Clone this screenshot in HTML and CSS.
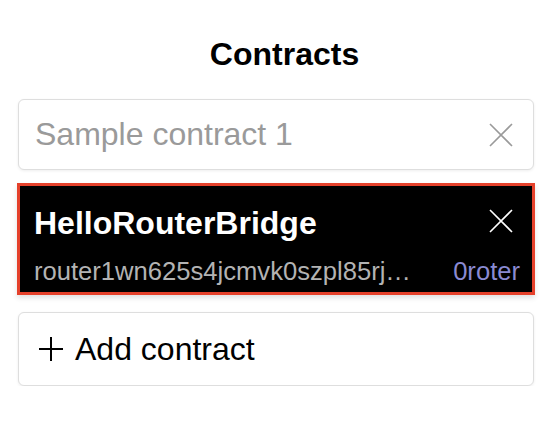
FILE: index.html
```html
<!DOCTYPE html>
<html>
<head>
<meta charset="utf-8">
<link rel="stylesheet" href="styles.css">
</head>
<body>
<div class="page">
  <h1 class="title">Contracts</h1>
  <div class="list">
    <div class="card">
      <span class="placeholder">Sample contract 1</span>
      <svg class="close gray" viewBox="0 0 24 24" width="24" height="24"><path d="M1 1L23 23M23 1L1 23" /></svg>
    </div>
    <div class="card selected">
      <div class="row top">
        <span class="name">HelloRouterBridge</span>
        <svg class="close white" viewBox="0 0 24 24" width="24" height="24"><path d="M1 1L23 23M23 1L1 23" /></svg>
      </div>
      <div class="row bottom">
        <span class="addr">router1wn625s4jcmvk0szpl85rj…</span>
        <span class="bal">0roter</span>
      </div>
    </div>
    <div class="card add">
      <svg class="plus" viewBox="0 0 24 24" width="24" height="24"><path d="M12 0V24M0 12H24" /></svg>
      <span class="add-label">Add contract</span>
    </div>
  </div>
</div>
</body>
</html>
```

FILE: styles.css
```css
html, body {
  margin: 0;
  padding: 0;
  background: #ffffff;
}
body {
  font-family: "Liberation Sans", Arial, sans-serif;
  color: #000;
}
.page {
  padding: 0 21px 0 17px;
}
.title {
  margin: 0;
  padding: 36px 0 0 17px;
  font-size: 32px;
  line-height: 36px;
  font-weight: bold;
  text-align: center;
}
.list {
  margin-top: 27px;
  display: flex;
  flex-direction: column;
  gap: 13px;
}
.card {
  box-sizing: border-box;
  border: 1px solid #dedede;
  border-radius: 6px;
  box-shadow: 0 1px 3px rgba(0,0,0,0.07);
  background: #fff;
  margin: 0 1px;
  height: 71px;
  display: flex;
  align-items: center;
  justify-content: space-between;
  padding: 0 20px 0 16px;
}
.placeholder {
  font-size: 32px;
  color: #9a9a9a;
}
.close path {
  stroke-width: 1.6;
  fill: none;
}
.close.gray path { stroke: #9a9a9a; }
.close.white path { stroke: #ffffff; }
.card.selected {
  margin: 0;
  height: 112px;
  border: 3px solid #e5412b;
  border-radius: 0;
  background: #000;
  box-shadow: 0 3px 5px rgba(0,0,0,0.12);
  display: block;
  padding: 19px 12px 0 14px;
}
.row {
  display: flex;
  align-items: center;
  justify-content: space-between;
}
.row.top {
  height: 36px;
}
.row.top .close {
  margin-right: 7px;
  margin-top: -4px;
}
.name {
  font-size: 32px;
  font-weight: bold;
  color: #ffffff;
  line-height: 36px;
}
.row.bottom {
  margin-top: 16px;
  height: 28px;
}
.addr {
  font-size: 25.6px;
  line-height: 28px;
  color: #b3b3b3;
  white-space: nowrap;
}
.bal {
  font-size: 25.6px;
  line-height: 28px;
  color: #8a8ad2;
}
.card.add {
  height: 74px;
  justify-content: flex-start;
  padding-left: 20px;
  margin-top: 4px;
}
.plus path {
  stroke: #000;
  stroke-width: 2;
  fill: none;
}
.add-label {
  margin-left: 12px;
  font-size: 32px;
  color: #000;
}
```
